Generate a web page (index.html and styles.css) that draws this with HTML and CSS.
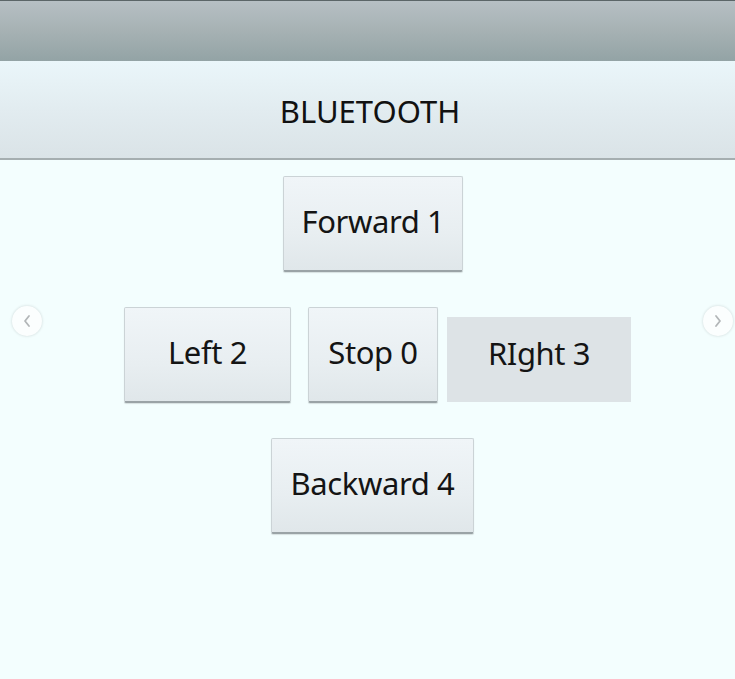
FILE: index.html
```html
<!DOCTYPE html>
<html>
<head>
<meta charset="utf-8">
<link rel="stylesheet" href="styles.css">
</head>
<body>
<div class="topbar"></div>
<div class="header">BLUETOOTH</div>
<main class="pad">
  <div class="row row-top">
    <button class="btn btn-forward">Forward 1</button>
  </div>
  <div class="row row-mid">
    <button class="btn btn-left">Left 2</button>
    <button class="btn btn-stop">Stop 0</button>
    <button class="btn btn-right">RIght 3</button>
  </div>
  <div class="row row-bottom">
    <button class="btn btn-back">Backward 4</button>
  </div>
</main>
<div class="nav nav-prev"><svg viewBox="0 0 12 14" width="12" height="14"><path d="M8 2 L4 7 L8 12" fill="none" stroke="#b2b6b8" stroke-width="1.8" stroke-linecap="round" stroke-linejoin="round"/></svg></div>
<div class="nav nav-next"><svg viewBox="0 0 12 14" width="12" height="14"><path d="M4 2 L8 7 L4 12" fill="none" stroke="#b2b6b8" stroke-width="1.8" stroke-linecap="round" stroke-linejoin="round"/></svg></div>
</body>
</html>
```
FILE: styles.css
```css
html, body {
  margin: 0;
  padding: 0;
  background: #f3fefe;
  width: 735px;
  height: 679px;
  overflow: hidden;
  font-family: "Noto Sans", "Open Sans", sans-serif;
  color: #111;
}
.topbar {
  height: 60px;
  border-top: 1px solid #5b6568;
  background: linear-gradient(to bottom, #b6bfc4 0%, #a8b3b5 45%, #93a3a5 100%);
}
.header {
  height: 99px;
  border-bottom: 2px solid #a5aeb0;
  background: linear-gradient(to bottom, #eaf6fa 0%, #e2ecf0 50%, #dae3e7 100%);
  display: flex;
  align-items: center;
  justify-content: center;
  font-size: 31px;
  padding-left: 5px;
  padding-top: 2px;
  box-sizing: border-box;
}
.pad {
  padding: 16px 0 0 11px;
  display: flex;
  flex-direction: column;
  gap: 35px;
}
.row {
  display: flex;
  justify-content: center;
  align-items: flex-start;
}
.row-mid { margin-left: 9px; }
.btn {
  font-family: inherit;
  font-size: 31px;
  letter-spacing: -0.4px;
  color: #141414;
  height: 96px;
  border: 1px solid #cbd3d6;
  border-bottom: 2px solid #9aa3a6;
  border-radius: 2px;
  background: linear-gradient(to bottom, #f0f5f8 0%, #e8eef1 60%, #e0e7ea 100%);
  box-shadow: 0 1px 1px rgba(0,0,0,0.12);
  padding: 0 0 5px 0;
  box-sizing: border-box;
}
.btn-forward { width: 180px; }
.btn-left { width: 167px; }
.btn-stop { width: 130px; margin-left: 17px; }
.btn-right {
  width: 184px;
  height: 85px;
  margin-left: 9px;
  margin-top: 10px;
  padding-bottom: 14px;
  background: #dde3e6;
  border: none;
  box-shadow: none;
  border-radius: 0;
}
.btn-back { width: 203px; margin-left: -1px; }
.nav {
  position: absolute;
  top: 306px;
  width: 30px;
  height: 30px;
  border-radius: 50%;
  background: #fbfefe;
  box-shadow: 0 0 3px rgba(0,0,0,0.16);
  display: flex;
  align-items: center;
  justify-content: center;
}
.nav-prev { left: 12px; }
.nav-next { left: 703px; }
```
